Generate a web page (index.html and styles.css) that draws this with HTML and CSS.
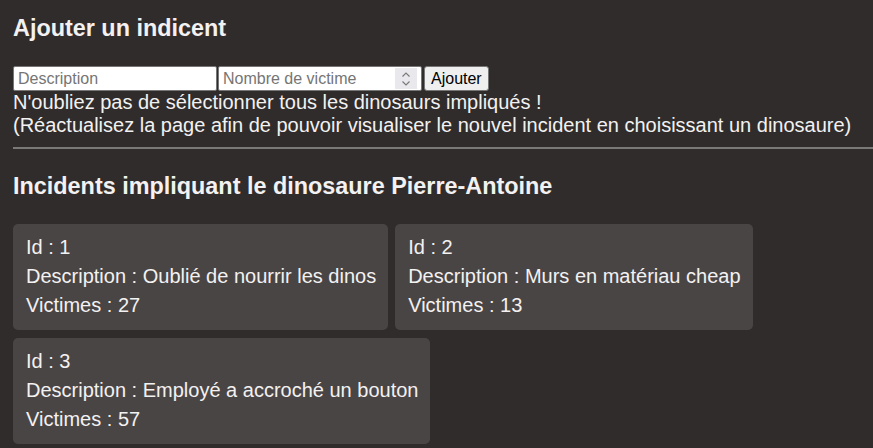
FILE: index.html
```html
<!DOCTYPE html>
<html lang="fr">
<head>
<meta charset="utf-8">
<title>Incidents</title>
<link rel="stylesheet" href="styles.css">
</head>
<body>
<h3 class="title">Ajouter un indicent</h3>
<form class="add-form">
  <input class="field" type="text" placeholder="Description">
  <div class="field number-field">
    <input class="number-input" type="number" placeholder="Nombre de victime">
    <span class="spinner">
      <svg width="10" height="16" viewBox="0 0 10 16" aria-hidden="true">
        <path d="M1.5 5.5 L5 2 L8.5 5.5" fill="none" stroke="#7a7a7a" stroke-width="1.2"/>
        <path d="M1.5 10.5 L5 14 L8.5 10.5" fill="none" stroke="#7a7a7a" stroke-width="1.2"/>
      </svg>
    </span>
  </div>
  <button class="btn" type="button">Ajouter</button>
</form>
<p class="note">N'oubliez pas de sélectionner tous les dinosaurs impliqués !<br>(Réactualisez la page afin de pouvoir visualiser le nouvel incident en choisissant un dinosaure)</p>
<hr class="sep">
<h3 class="title title-list">Incidents impliquant le dinosaure Pierre-Antoine</h3>
<div class="cards">
  <div class="card">
    <div>Id : 1</div>
    <div>Description : Oublié de nourrir les dinos</div>
    <div>Victimes : 27</div>
  </div>
  <div class="card">
    <div>Id : 2</div>
    <div>Description : Murs en matériau cheap</div>
    <div>Victimes : 13</div>
  </div>
  <div class="card">
    <div>Id : 3</div>
    <div>Description : Employé a accroché un bouton</div>
    <div>Victimes : 57</div>
  </div>
</div>
</body>
</html>
```

FILE: styles.css
```css
html, body {
  margin: 0;
  background: #302c2c;
}
body {
  padding: 0 0 0 13px;
  color: #f3f1f1;
  font-family: "Liberation Sans", Arial, sans-serif;
  font-size: 20px;
}
.title {
  font-size: 23.4px;
  font-weight: bold;
  line-height: 27px;
  margin: 15px 0 24px;
}
.title-list {
  margin: 24px 0 24px;
}
.add-form {
  display: flex;
  margin: 0;
  height: 25px;
}
.field {
  box-sizing: border-box;
  width: 204px;
  height: 25px;
  margin: 0 1px 0 0;
  padding: 1px 4px;
  border: 1px solid #767676;
  border-radius: 2px;
  background: #fff;
  color: #000;
  font-family: "Liberation Sans", Arial, sans-serif;
  font-size: 16px;
  outline: none;
}
.field::placeholder,
.number-input::placeholder {
  color: #757575;
}
.number-field {
  display: flex;
  align-items: center;
  padding: 0 4px 0 4px;
  margin-right: 2px;
}
.number-input {
  flex: 1;
  min-width: 0;
  height: 100%;
  margin: 0;
  padding: 0;
  border: 0;
  background: transparent;
  font-family: "Liberation Sans", Arial, sans-serif;
  font-size: 16px;
  outline: none;
  -moz-appearance: textfield;
}
.number-input::-webkit-inner-spin-button,
.number-input::-webkit-outer-spin-button {
  -webkit-appearance: none;
  margin: 0;
}
.spinner {
  display: flex;
  align-items: center;
  justify-content: center;
  width: 22px;
  height: 21px;
  background: #e9e9ed;
}
.btn {
  box-sizing: border-box;
  height: 25px;
  margin: 0;
  padding: 1px 6px;
  border: 1px solid #767676;
  border-radius: 3px;
  background: #efefef;
  color: #000;
  font-family: "Liberation Sans", Arial, sans-serif;
  font-size: 16px;
}
.note {
  margin: 0;
  line-height: 23px;
}
.sep {
  border: 0;
  border-top: 2px solid #7b7878;
  margin: 10px 0 0;
}
.cards {
  display: flex;
  flex-wrap: wrap;
  align-items: flex-start;
  gap: 8px 7px;
}
.card {
  background: #4a4545;
  border-radius: 5px;
  padding: 9px 12px 10px 13px;
  line-height: 29px;
}
```
